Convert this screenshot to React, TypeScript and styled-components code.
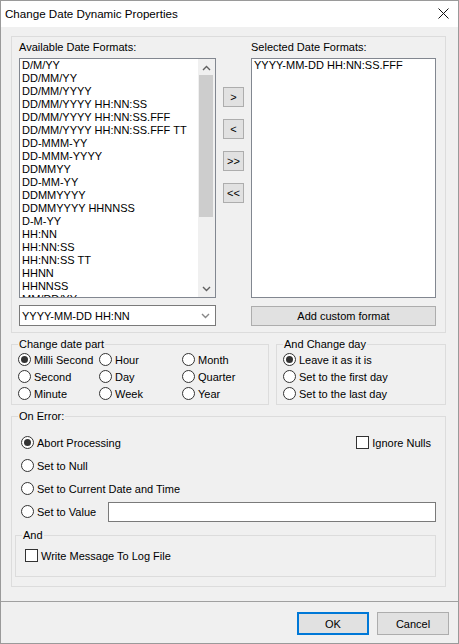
import styled, { createGlobalStyle } from "styled-components"

const GlobalStyle = createGlobalStyle`
  html, body {
    margin: 0;
    padding: 0;
    background: #f0f0f0;
  }

  body {
    font-family: "Liberation Sans", Arial, sans-serif;
    font-size: 11px;
    color: #000;
  }

  * {
    box-sizing: border-box;
  }
`

const Window = styled.div`
  width: 459px;
  height: 644px;
  border: 1px solid #9a9a9a;
  background: #f0f0f0;
  display: flex;
  flex-direction: column;
`

const TitleBar = styled.div`
  height: 26px;
  flex-shrink: 0;
  background: #fff;
  display: flex;
  align-items: center;
  justify-content: space-between;
  padding: 0 9px 2px 4px;
`

const Title = styled.span`
  font-size: 11.6px;
  color: #000;
`

const Content = styled.div`
  flex: 1;
  display: flex;
  flex-direction: column;
  padding: 9px 12px 0 10px;
`

const FormatsFrame = styled.div`
  border: 1px solid #dcdcdc;
  padding: 4px 9px 6px 7px;
  display: flex;
  gap: 7px;
`

const Column = styled.div<{ $width: number }>`
  width: ${(p) => p.$width}px;
  display: flex;
  flex-direction: column;
`

const Caption = styled.div`
  line-height: 13px;
  height: 13px;
  margin-bottom: 4px;
  white-space: nowrap;
`

const ListBox = styled.div`
  height: 240px;
  border: 1px solid #828790;
  background: #fff;
  display: flex;
  overflow: hidden;
`

const ListItems = styled.div`
  flex: 1;
  overflow: hidden;
`

const ListItem = styled.div`
  height: 13px;
  line-height: 13px;
  padding-left: 2px;
  white-space: nowrap;
`

const ScrollBar = styled.div`
  width: 17px;
  background: #f0f0f0;
  display: flex;
  flex-direction: column;
`

const ScrollArrow = styled.div`
  height: 17px;
  display: flex;
  align-items: center;
  justify-content: center;
`

const ScrollTrack = styled.div`
  flex: 1;
`

const ScrollThumb = styled.div`
  height: 142px;
  margin: -1px 2px 0 1px;
  background: #cdcdcd;
`

const Combo = styled.div`
  margin-top: 7px;
  height: 21px;
  border: 1px solid #7a7a7a;
  background: #fff;
  display: flex;
  align-items: center;
  justify-content: space-between;
  padding: 0 5px 0 2px;
`

const MoveColumn = styled.div`
  width: 21px;
  padding-top: 46px;
  display: flex;
  flex-direction: column;
  gap: 12px;
`

const SmallButton = styled.button`
  width: 21px;
  height: 20px;
  padding: 0;
  border: 1px solid #adadad;
  background: #e1e1e1;
  font-family: inherit;
  font-size: 11px;
  color: #000;
  display: flex;
  align-items: center;
  justify-content: center;
`

const WideButton = styled.button`
  margin-top: 8px;
  height: 20px;
  border: 1px solid #adadad;
  background: #e1e1e1;
  font-family: inherit;
  font-size: 11px;
  color: #000;
  padding: 0;
`

const MiddleRow = styled.div`
  margin-top: 5px;
  display: flex;
  gap: 7px;
`

const Group = styled.fieldset<{ $width?: number }>`
  margin: 0;
  min-width: 0;
  border: 1px solid #dcdcdc;
  padding: 0 6px 2px 6px;
  ${(p) => (p.$width ? `width: ${p.$width}px;` : "flex: 1;")}
`

const Legend = styled.legend`
  padding: 0 1px;
  line-height: 13px;
  height: 13px;
`

const RadioGrid = styled.div`
  display: grid;
  grid-template-columns: 81px 83px 1fr;
  grid-auto-rows: 17px;
`

const RadioStack = styled.div`
  display: grid;
  grid-auto-rows: 17px;
`

const Option = styled.label<{ $width?: number; $trail?: number }>`
  display: flex;
  align-items: center;
  gap: 3px;
  white-space: nowrap;
  ${(p) => (p.$width ? `width: ${p.$width}px; flex-shrink: 0;` : "")}
  ${(p) => (p.$trail ? `margin-right: ${p.$trail}px;` : "")}
`

const RadioCircle = styled.span<{ $checked?: boolean }>`
  width: 13px;
  height: 13px;
  flex-shrink: 0;
  border: 1px solid #333;
  border-radius: 50%;
  background: #fff;
  display: flex;
  align-items: center;
  justify-content: center;

  &::after {
    content: "";
    width: 7px;
    height: 7px;
    border-radius: 50%;
    background: ${(p) => (p.$checked ? "#333" : "transparent")};
  }
`

const CheckSquare = styled.span`
  width: 13px;
  height: 13px;
  flex-shrink: 0;
  border: 1px solid #333;
  background: #fff;
`

const ErrorGroup = styled(Group)`
  margin-top: 5px;
  flex: none;
  padding: 8px 9px 9px 6px;
`

const ErrorBody = styled.div`
  padding-left: 3px;
  display: flex;
  flex-direction: column;
`

const ErrorRow = styled.div`
  height: 23px;
  display: flex;
  align-items: center;
  justify-content: space-between;
`

const ValueInput = styled.input`
  flex: 1;
  height: 20px;
  border: 1px solid #7a7a7a;
  background: #fff;
  padding: 0 2px;
  font-family: inherit;
  font-size: 11px;
  outline: none;
`

const AndGroup = styled(Group)`
  margin: 6px 0 0 -3px;
  flex: none;
  padding: 5px 9px 12px 6px;
`

const AndBody = styled.div`
  padding-left: 3px;
  height: 17px;
  display: flex;
  align-items: center;
`

const Footer = styled.div`
  height: 42px;
  flex-shrink: 0;
  border-top: 1px solid #a0a0a0;
  padding: 10px 9px 0 0;
  display: flex;
  justify-content: flex-end;
  align-items: flex-start;
  gap: 8px;
`

const DialogButton = styled.button<{ $default?: boolean }>`
  width: 72px;
  height: 23px;
  padding: 0;
  background: #e1e1e1;
  border: ${(p) => (p.$default ? "2px solid #0078d7" : "1px solid #adadad")};
  font-family: inherit;
  font-size: 11px;
  color: #000;
`

const availableFormats = [
  "D/M/YY",
  "DD/MM/YY",
  "DD/MM/YYYY",
  "DD/MM/YYYY HH:NN:SS",
  "DD/MM/YYYY HH:NN:SS.FFF",
  "DD/MM/YYYY HH:NN:SS.FFF TT",
  "DD-MMM-YY",
  "DD-MMM-YYYY",
  "DDMMYY",
  "DD-MM-YY",
  "DDMMYYYY",
  "DDMMYYYY HHNNSS",
  "D-M-YY",
  "HH:NN",
  "HH:NN:SS",
  "HH:NN:SS TT",
  "HHNN",
  "HHNNSS",
  "MM/DD/YY",
]

const dateParts = [
  ["Milli Second", "Hour", "Month"],
  ["Second", "Day", "Quarter"],
  ["Minute", "Week", "Year"],
]

function Chevron({ up, color = "#606060" }: { up?: boolean; color?: string }) {
  return (
    <svg width="9" height="6" viewBox="0 0 9 6">
      <polyline
        points={up ? "1,5 4.5,1.5 8,5" : "1,1 4.5,4.5 8,1"}
        fill="none"
        stroke={color}
        strokeWidth="1.4"
      />
    </svg>
  )
}

function Radio({ label, checked, width }: { label: string; checked?: boolean; width?: number }) {
  return (
    <Option $width={width}>
      <RadioCircle $checked={checked} />
      {label}
    </Option>
  )
}

export default function App() {
  return (
    <Window>
      <GlobalStyle />
      <TitleBar>
        <Title>Change Date Dynamic Properties</Title>
        <svg width="11" height="11" viewBox="0 0 11 11">
          <path d="M0.5 0.5 L10.5 10.5 M10.5 0.5 L0.5 10.5" stroke="#111" strokeWidth="1" />
        </svg>
      </TitleBar>

      <Content>
        <FormatsFrame>
          <Column $width={197}>
            <Caption>Available Date Formats:</Caption>
            <ListBox>
              <ListItems>
                {availableFormats.map((f) => (
                  <ListItem key={f}>{f}</ListItem>
                ))}
              </ListItems>
              <ScrollBar>
                <ScrollArrow>
                  <Chevron up />
                </ScrollArrow>
                <ScrollTrack>
                  <ScrollThumb />
                </ScrollTrack>
                <ScrollArrow>
                  <Chevron />
                </ScrollArrow>
              </ScrollBar>
            </ListBox>
            <Combo>
              <span>YYYY-MM-DD HH:NN</span>
              <Chevron color="#888" />
            </Combo>
          </Column>

          <MoveColumn>
            <SmallButton>&gt;</SmallButton>
            <SmallButton>&lt;</SmallButton>
            <SmallButton>&gt;&gt;</SmallButton>
            <SmallButton>&lt;&lt;</SmallButton>
          </MoveColumn>

          <Column $width={185}>
            <Caption>Selected Date Formats:</Caption>
            <ListBox>
              <ListItems>
                <ListItem>YYYY-MM-DD HH:NN:SS.FFF</ListItem>
              </ListItems>
            </ListBox>
            <WideButton>Add custom format</WideButton>
          </Column>
        </FormatsFrame>

        <MiddleRow>
          <Group $width={258}>
            <Legend>Change date part</Legend>
            <RadioGrid>
              {dateParts.flat().map((p) => (
                <Radio key={p} label={p} checked={p === "Milli Second"} />
              ))}
            </RadioGrid>
          </Group>
          <Group>
            <Legend>And Change day</Legend>
            <RadioStack>
              <Radio label="Leave it as it is" checked />
              <Radio label="Set to the first day" />
              <Radio label="Set to the last day" />
            </RadioStack>
          </Group>
        </MiddleRow>

        <ErrorGroup>
          <Legend>On Error:</Legend>
          <ErrorBody>
            <ErrorRow>
              <Radio label="Abort Processing" checked />
              <Option $trail={5}>
                <CheckSquare />
                Ignore Nulls
              </Option>
            </ErrorRow>
            <ErrorRow>
              <Radio label="Set to Null" />
            </ErrorRow>
            <ErrorRow>
              <Radio label="Set to Current Date and Time" />
            </ErrorRow>
            <ErrorRow>
              <Radio label="Set to Value" width={87} />
              <ValueInput defaultValue="" />
            </ErrorRow>
          </ErrorBody>
          <AndGroup>
            <Legend>And</Legend>
            <AndBody>
              <Option>
                <CheckSquare />
                Write Message To Log File
              </Option>
            </AndBody>
          </AndGroup>
        </ErrorGroup>
      </Content>

      <Footer>
        <DialogButton $default>OK</DialogButton>
        <DialogButton>Cancel</DialogButton>
      </Footer>
    </Window>
  )
}
